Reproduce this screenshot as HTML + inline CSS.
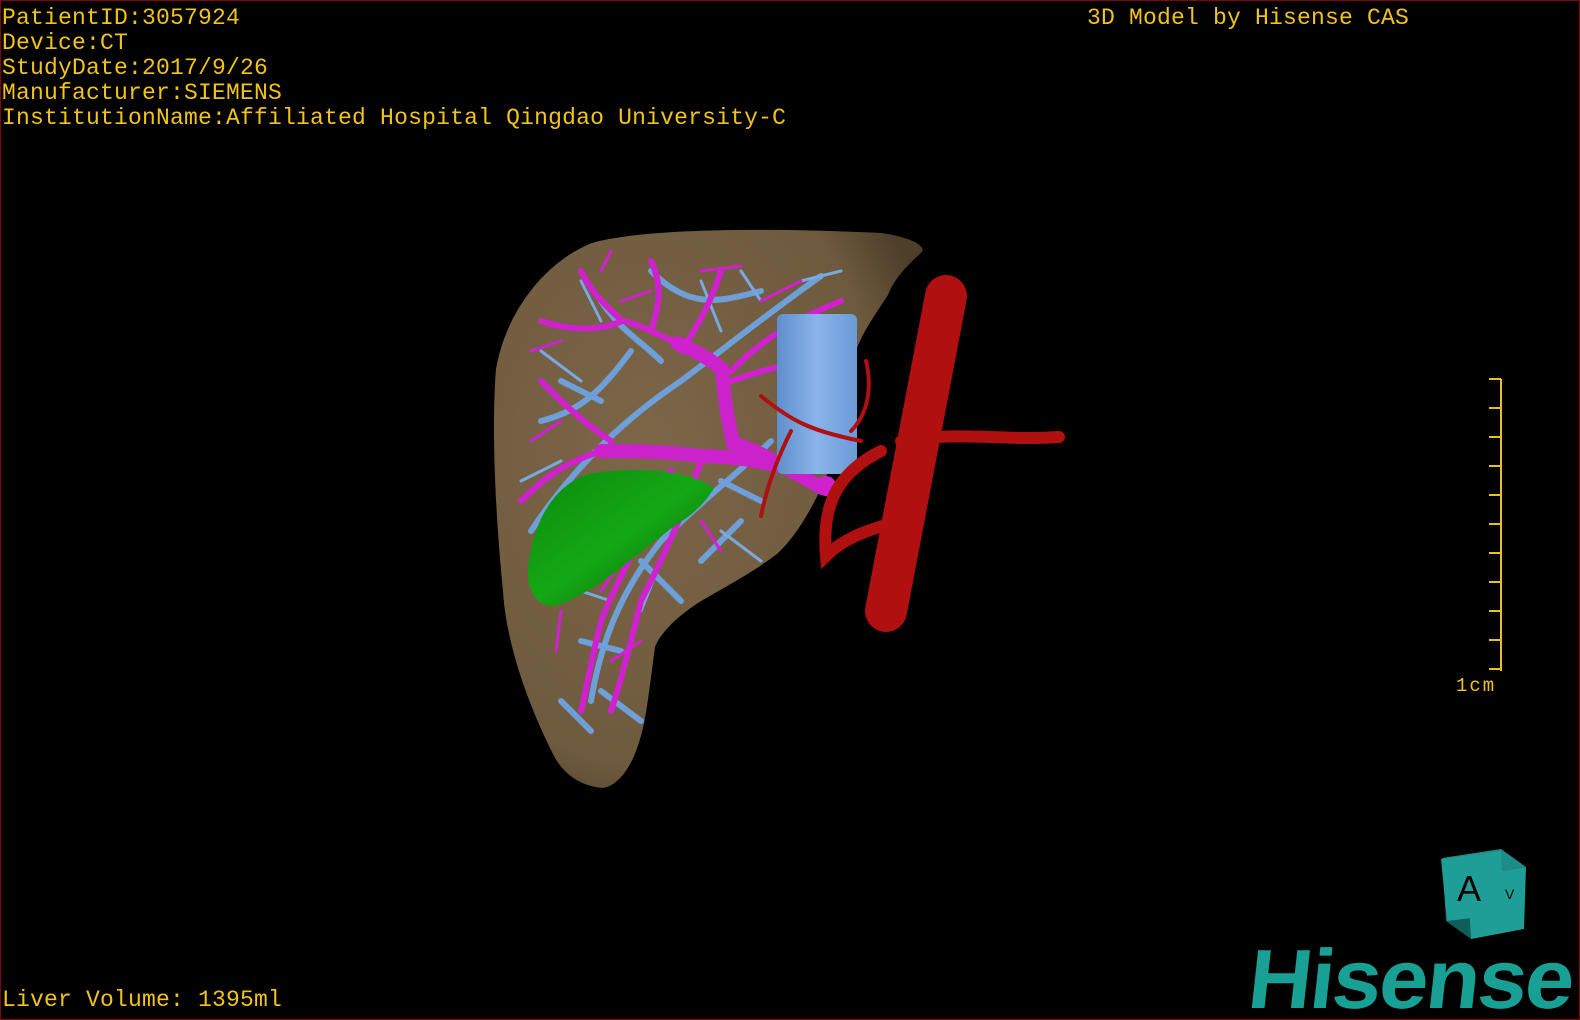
<!DOCTYPE html>
<html><head><meta charset="utf-8"><style>
html,body{margin:0;padding:0;background:#000;}
#c{position:relative;width:1580px;height:1020px;background:#000;box-sizing:border-box;border:1px solid #7a0a0a;overflow:hidden;}
.t{position:absolute;color:#f2c318;font-family:"Liberation Mono",monospace;font-size:23px;line-height:25px;white-space:pre;letter-spacing:0.2px;}
.logo{position:absolute;left:1248px;top:930px;font-family:"Liberation Sans",sans-serif;font-weight:bold;font-size:84px;color:#18a095;letter-spacing:-2px;transform:scaleX(1.05) skewX(-6deg);transform-origin:left;}
</style></head><body><div id="c">
<div class="t" style="left:1px;top:5px">PatientID:3057924
Device:CT
StudyDate:2017/9/26
Manufacturer:SIEMENS
InstitutionName:Affiliated Hospital Qingdao University-C</div>
<div class="t" style="left:1086px;top:5px">3D Model by Hisense CAS</div>
<div class="t" style="left:1px;top:987px">Liver Volume: 1395ml</div>
<svg width="1580" height="1020" style="position:absolute;left:0;top:0">
<defs>
<radialGradient id="lv" cx="0.35" cy="0.4" r="0.7"><stop offset="0" stop-color="#7d6648"/><stop offset="0.8" stop-color="#6e5a3e"/><stop offset="1" stop-color="#4e3f2b"/></radialGradient>
<linearGradient id="gb" x1="0" y1="0" x2="1" y2="1"><stop offset="0" stop-color="#0c8a0c"/><stop offset="0.5" stop-color="#14a814"/><stop offset="1" stop-color="#066006"/></linearGradient>
<linearGradient id="ivc" x1="0" y1="0" x2="1" y2="0"><stop offset="0" stop-color="#5f8fcc"/><stop offset="0.5" stop-color="#8ab4ea"/><stop offset="1" stop-color="#6b9ad6"/></linearGradient>
</defs>
<path d="M591,242 C650,225 800,228 880,232 C910,236 925,245 921,251 C905,265 892,280 887,294 C870,320 855,340 850,368 C842,420 835,450 824,479 C805,520 790,540 776,553 C740,580 705,595 687,609 C665,625 656,640 654,646 C648,690 645,720 639,738 C630,770 615,785 602,787 C580,785 565,775 554,757 C525,700 505,640 502,590 C495,520 490,430 495,368 C505,310 545,260 591,242 Z" fill="url(#lv)"/>
<g fill="none" stroke-linecap="round">
<g stroke="#6f9fd8" stroke-width="6">
<path d="M590,700 C600,640 620,590 660,540 C700,500 740,470 770,440"/>
<path d="M530,530 C570,470 620,420 680,380 C720,350 770,310 820,275"/>
<path d="M540,420 C580,410 600,390 630,350"/>
<path d="M590,730 L560,700 M600,690 L640,720 M620,650 L580,640"/>
<path d="M650,270 C690,310 720,300 760,290 M600,300 C620,330 640,340 660,360"/>
<path d="M700,560 L740,520 M720,480 L760,500 M640,560 L680,600 M560,380 L600,400"/>
</g>
<g stroke="#7aa8e0" stroke-width="3">
<path d="M540,350 L580,380 M560,460 L520,480 M600,320 L580,280 M700,280 L720,330 M740,270 L760,300 M800,280 L840,270 M720,530 L760,560 M660,560 L640,610 M610,600 L580,590 M600,560 L560,600"/>
</g>
<g stroke="#cc22cc" stroke-width="14">
<path d="M821,487 C790,470 760,450 732,442 C725,410 722,385 721,368 C705,355 690,348 676,342"/>
<path d="M800,470 C760,460 730,455 700,455 C660,450 630,450 600,450"/>
</g>
<g stroke="#d020d0" stroke-width="6">
<path d="M676,342 C650,330 630,320 621,320 C600,300 590,290 580,270"/>
<path d="M680,350 C700,320 710,300 720,270 M730,370 C760,340 790,320 840,300"/>
<path d="M600,450 C570,460 550,470 520,500 M610,440 C580,420 560,400 540,380"/>
<path d="M700,460 C680,520 660,560 640,600 C630,640 620,680 610,710"/>
<path d="M670,470 C650,520 620,570 600,620 C590,660 585,690 580,710"/>
<path d="M621,320 C600,330 570,330 540,320 M650,330 C660,300 660,280 650,260"/>
<path d="M730,380 C760,370 790,360 830,360"/>
</g>
<g stroke="#d020d0" stroke-width="3">
<path d="M600,270 L610,250 M620,300 L650,290 M560,340 L530,350 M560,420 L530,440 M700,270 L740,265 M700,520 L720,550 M620,560 L600,590 M640,640 L610,660 M560,610 L555,650 M760,300 L800,280"/>
</g>
</g>
<rect x="776" y="313" width="80" height="160" rx="6" fill="url(#ivc)"/>
<path d="M528,560 C535,510 560,480 591,472 C640,465 690,470 713,487 C705,500 700,505 687,516 C650,540 620,570 591,587 C570,600 555,606 547,605 C530,600 524,580 528,560 Z" fill="url(#gb)"/>
<circle cx="825" cy="485" r="10" fill="#d020d0"/>
<g fill="none" stroke="#b01010" stroke-linecap="round">
<path d="M945,295 L885,610" stroke-width="42"/>
<path d="M900,440 C960,430 1000,440 1058,436" stroke-width="12"/>
<path d="M880,450 C840,470 820,500 825,555 C840,540 860,530 900,520" stroke-width="12"/>
<path d="M860,440 C810,430 790,420 760,395 M850,430 C870,410 870,380 865,360" stroke-width="4"/>
<path d="M790,430 C775,460 765,490 760,515" stroke-width="4"/>
</g>
<g stroke="#e8c020" stroke-width="2" fill="none">
<path d="M1500,378 L1500,670"/>
<path d="M1488,378H1500M1488,407H1500M1488,436H1500M1488,465H1500M1488,494H1500M1488,523H1500M1488,552H1500M1488,581H1500M1488,610H1500M1488,639H1500M1488,668H1500"/>
</g>
<text x="1455" y="690" fill="#f2c318" font-family="Liberation Mono,monospace" font-size="19" letter-spacing="2">1cm</text>
<polygon points="1441,857 1500,848 1525,866 1466,875" fill="#1e8c88"/>
<polygon points="1441,857 1466,875 1470,938 1445,920" fill="#0f5e5a"/>
<polygon points="1466,875 1525,866 1523,928 1470,938" fill="#1f9e98"/>
<polygon points="1440,858 1500,850 1503,913 1446,920" fill="#1f9e98"/>
<text x="1456" y="900" font-family="Liberation Sans,sans-serif" font-size="36" fill="#000">A</text>
<text x="1504" y="898" font-family="Liberation Sans,sans-serif" font-size="14" fill="#000">V</text>
</svg>
<div class="logo">Hisense</div>
</div></body></html>
